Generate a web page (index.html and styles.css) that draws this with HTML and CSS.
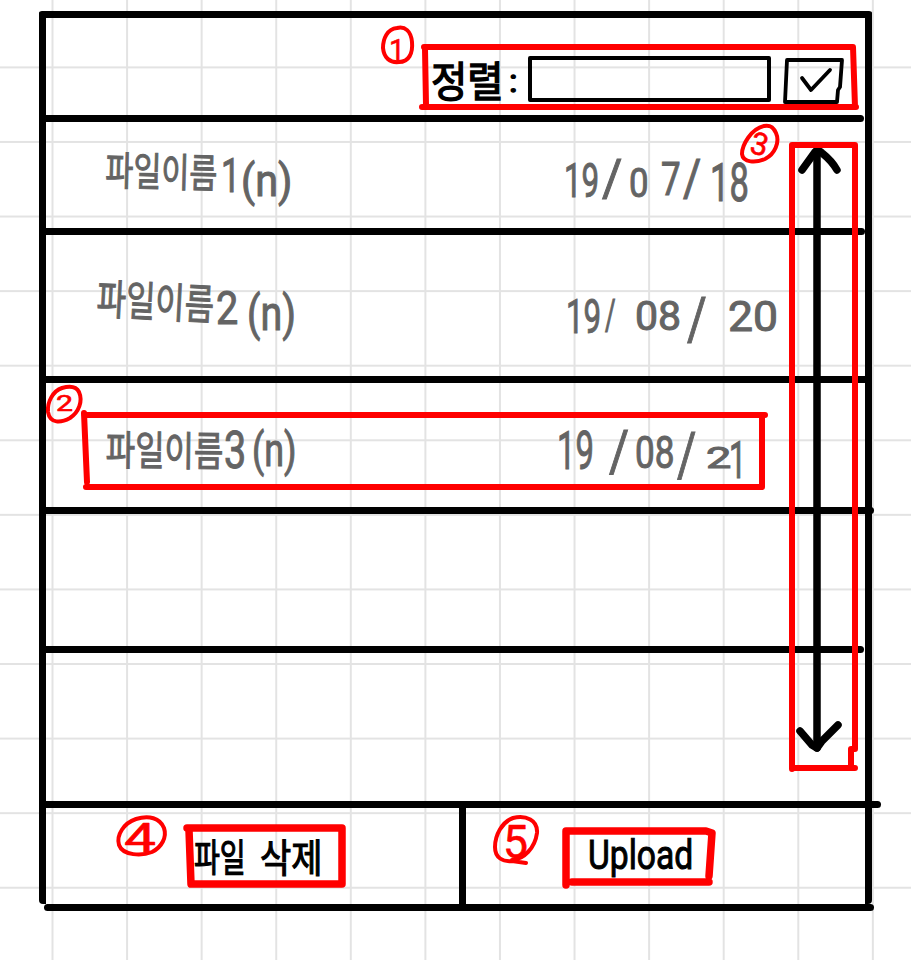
FILE: index.html
```
<!DOCTYPE html>
<html lang="ko">
<head>
<meta charset="utf-8">
<title>파일 목록</title>
<link rel="stylesheet" href="styles.css">
</head>
<body>
<main class="panel">
  <header class="row head">
    <span class="ink ko sort">정렬</span>
    <span class="ink colon">:</span>
    <div class="field"></div>
    <svg class="check" width="64" height="50" viewBox="0 0 64 50"><path d="M6 4L4 46H56L57 34L59 31L61 4ZM21 22L30 34L49 14"/></svg>
  </header>
  <section class="row r1">
    <div class="name"><span class="ink ko">파일이름</span><span class="ink num">1</span><span class="ink par">(n)</span></div>
    <div class="date"><span class="ink a">19</span><span class="ink b">/</span><span class="ink c">0</span><span class="ink d">7</span><span class="ink e">/</span><span class="ink f">18</span></div>
  </section>
  <section class="row r2">
    <div class="name"><span class="ink ko">파일이름</span><span class="ink num">2</span><span class="ink par">(n)</span></div>
    <div class="date"><span class="ink a">19</span><span class="ink b">/</span><span class="ink c">08</span><span class="ink d">/</span><span class="ink e">20</span></div>
  </section>
  <section class="row r3">
    <div class="name"><span class="ink ko">파일이름</span><span class="ink num">3</span><span class="ink par">(n)</span></div>
    <div class="date"><span class="ink a">19</span><span class="ink b">/</span><span class="ink c">08</span><span class="ink d">/</span><span class="ink e">2</span><span class="ink f">1</span></div>
  </section>
  <section class="row r4"></section>
  <section class="row r5"></section>
  <footer class="foot">
    <div class="cell remove"><span class="ink ko">파일</span><span class="ink ko last">삭제</span></div>
    <div class="cell upload"><span class="ink">Upload</span></div>
  </footer>
</main>
<svg class="notes" width="911" height="960" viewBox="0 0 911 960">
  <path class="arrow" d="M817 150V748"/>
  <path class="arrow tip" d="M802 170L815 152Q818 149 822 153Q832 161 837 170M800 731L812 745L817 748L822 741L838 725"/>
  <g class="frame">
    <path d="M424 47H853L855 107M425 49L426 105M422 107H856"/>
    <path d="M84 415H765M84 413L87 482M86 487H762V415"/>
    <path d="M792 145H855V749L851 749V768M792 145V769M792 768H855"/>
  </g>
  <g class="frame bold">
    <path d="M187 828H342V884H191L189 830"/>
    <path d="M566 885V831H706L712 833L709 876M572 882H709"/>
  </g>
  <g class="ring">
    <path d="M397 28C387 29 383 39 383 48C384 58 390 63 399 62C409 62 413 53 412 42C411 31 405 26 397 28Z"/>
    <path d="M62 388C53 391 47 402 48 412C50 424 61 423 70 418C79 412 83 401 79 392C76 386 69 386 62 388Z"/>
    <path d="M764 126C751 129 742 145 742 154C743 163 756 163 765 159C775 154 780 142 776 133C773 126 769 125 764 126Z"/>
    <path d="M136 819C124 823 116 835 119 845C123 856 142 856 152 852C162 847 167 837 164 828C160 818 149 815 136 819Z"/>
    <path d="M526 863L512 861C503 862 495 858 495 847C495 835 502 822 513 818C526 815 538 820 537 833C535 848 524 859 512 860"/>
  </g>
  <g class="digit">
    <text x="389" y="61" font-size="31" textLength="16" lengthAdjust="spacingAndGlyphs">1</text>
    <text x="56" y="411" font-size="22" textLength="17" lengthAdjust="spacingAndGlyphs">2</text>
    <text x="751" y="155" font-size="31" transform="rotate(14 760 144)">3</text>
    <text x="124" y="852" font-size="40" textLength="32" lengthAdjust="spacingAndGlyphs">4</text>
    <text x="503" y="858" font-size="46" textLength="25" lengthAdjust="spacingAndGlyphs">5</text>
  </g>
</svg>
</body>
</html>
```
FILE: styles.css
```
* { box-sizing: border-box; }
body {
  margin: 0;
  height: 960px;
  overflow: hidden;
  position: relative;
  padding: 11px 0 0 39px;
  font-family: Roboto, "Noto Sans CJK KR", sans-serif;
  background-color: #fff;
  background-image:
    linear-gradient(90deg, #e3e3e3 2px, transparent 2px),
    linear-gradient(#e3e3e3 2px, transparent 2px);
  background-size: 74.58px 74.58px;
  background-position: 51.5px 0, 0 66.4px;
}
.panel {
  position: relative;
  width: 833px;
  height: 893px;
  border: solid #000;
  border-width: 7px 7px 0;
  border-radius: 3px 3px 4px 4px;
}
.panel::after {
  content: "";
  position: absolute;
  left: -2px;
  right: -9px;
  top: 886px;
  height: 7px;
  border-radius: 4px;
  background: #000;
}
.row {
  --end: 0px;
  position: relative;
  display: flex;
  align-items: flex-start;
  color: #646464;
}
.row::after {
  content: "";
  position: absolute;
  left: -3px;
  right: var(--end);
  bottom: 0;
  height: 7px;
  border-radius: 4px;
  background: #000;
}
.head { height: 104px; --end: 1px; padding-left: 385px; color: #000; }
.r1 { height: 113px; }
.r2 { height: 147.5px; --end: -3px; }
.r3 { height: 131px; --end: -9px; }
.r4 { height: 139.5px; --end: 1px; }
.r5 { height: 155px; --end: -16px; }
.name, .date { display: flex; align-items: flex-start; }

/* --w: advance, --t: top offset, --f: size, --s: horizontal squeeze, --r: tilt */
.ink {
  --r: 0deg;
  flex: none;
  display: block;
  width: var(--w);
  margin-top: var(--t);
  font-size: var(--f);
  line-height: 1;
  white-space: nowrap;
  transform: rotate(var(--r)) scaleX(var(--s));
  transform-origin: 0 0;
  -webkit-text-stroke: 1px currentColor;
}
.ko { font-family: "Noto Sans CJK KR", sans-serif; }

.sort { --w: 78px; --t: 40px; --f: 42px; --s: .94; -webkit-text-stroke-width: 1.4px; }
.colon { --w: 19px; --t: 47px; --f: 32px; --s: 1.1; -webkit-text-stroke-width: 1.4px; }
.field { width: 243px; height: 46px; margin-top: 38px; border: 4px solid #000; border-radius: 2px; }
.check { margin: 38px 0 0 10px; fill: none; stroke: #000; stroke-width: 3.8; stroke-linecap: round; stroke-linejoin: round; }

.r1 .name { width: 518px; padding-left: 60px; }
.r1 .ko { --w: 115px; --t: 26px; --f: 40px; --s: .76; --r: 1.5deg; }
.r1 .num { --w: 20px; --t: 29px; --f: 49px; --s: .7; }
.r1 .par { --w: 54px; --t: 36px; --f: 45px; --s: .92; }
.r1 .a { --w: 38px; --t: 34px; --f: 49px; --s: .64; }
.r1 .b { --w: 27px; --t: 31px; --f: 52px; --s: .95; }
.r1 .c { --w: 32px; --t: 41px; --f: 41px; --s: .85; }
.r1 .d { --w: 22px; --t: 34px; --f: 46px; --s: .76; }
.r1 .e { --w: 27px; --t: 31px; --f: 52px; --s: .85; }
.r1 .f { --w: 38px; --t: 34px; --f: 54px; --s: .64; }

.r2 .name { width: 520px; padding-left: 52px; }
.r2 .ko { --w: 118px; --t: 40px; --f: 42px; --s: .76; --r: 3deg; }
.r2 .num { --w: 31px; --t: 50px; --f: 46px; --s: .86; }
.r2 .par { --w: 50px; --t: 55px; --f: 48px; --s: .82; }
.r2 .a { --w: 39px; --t: 57px; --f: 49px; --s: .64; }
.r2 .b { --w: 30px; --t: 58px; --f: 43px; --s: .6; }
.r2 .c { --w: 52px; --t: 61px; --f: 41px; --s: 1; }
.r2 .d { --w: 41px; --t: 54px; --f: 60px; --s: .8; }
.r2 .e { --w: 50px; --t: 61px; --f: 42px; --s: 1.06; }

.r3 .name { width: 511px; padding-left: 60px; }
.r3 .ko { --w: 118px; --t: 44px; --f: 41px; --s: .78; --r: .7deg; }
.r3 .num { --w: 28px; --t: 42px; --f: 52px; --s: .76; }
.r3 .par { --w: 50px; --t: 44px; --f: 46px; --s: .78; }
.r3 .a { --w: 52px; --t: 42px; --f: 53px; --s: .62; }
.r3 .b { --w: 26px; --t: 39px; --f: 58px; --s: .84; }
.r3 .c { --w: 42px; --t: 47px; --f: 45px; --s: .78; }
.r3 .d { --w: 29px; --t: 41px; --f: 62px; --s: .76; }
.r3 .e { --w: 23px; --t: 60px; --f: 30px; --s: 1.5; }
.r3 .f { --w: 18px; --t: 52px; --f: 51px; --s: .6; }

.foot { display: flex; height: 96px; color: #000; }
.cell { display: flex; align-items: flex-start; }
.remove { width: 420px; padding-left: 148px; border-right: 7px solid #000; }
.remove .ink { --w: 66px; --t: 28px; --f: 38px; --s: .74; -webkit-text-stroke-width: 1.2px; }
.remove .last { --w: 63px; --f: 39px; --s: .87; }
.upload { padding-left: 122px; }
.upload .ink { --w: 104px; --t: 27px; --f: 41px; --s: .82; }

.notes { position: absolute; left: 0; top: 0; fill: none; stroke-linecap: round; stroke-linejoin: round; }
.arrow { stroke: #000; stroke-width: 7.5; }
.frame { stroke: #f00; stroke-width: 6; }
.frame.bold { stroke-width: 7.5; }
.ring { stroke: #f00; stroke-width: 4; }
.digit { fill: #f00; stroke: #f00; stroke-width: .6; }
```
